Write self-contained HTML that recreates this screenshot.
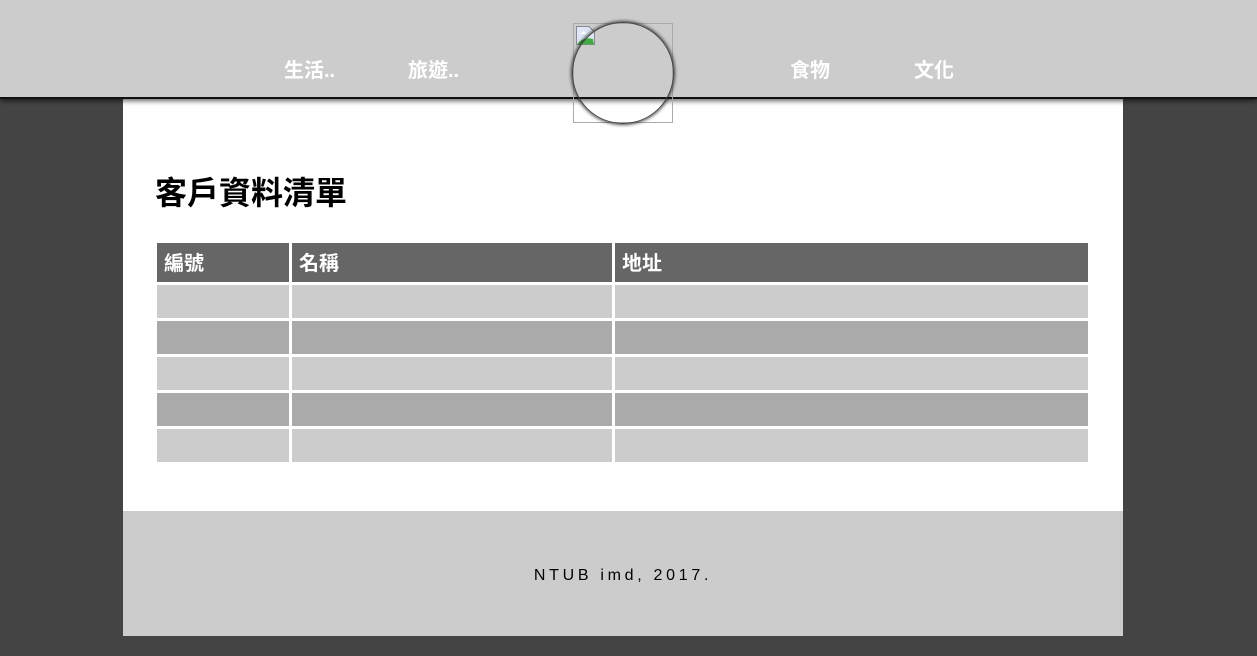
<!DOCTYPE html>
<html><head><meta charset="utf-8"><style>
*{margin:0;padding:0;box-sizing:border-box}
body{width:1257px;height:656px;background:#444;position:relative;overflow:hidden;font-family:"Liberation Sans","Noto Sans CJK TC",sans-serif}
.hdr{position:absolute;left:0;top:0;width:1257px;height:99px;background:#ccc;border-bottom:2px solid #111;box-shadow:0 2px 5px rgba(0,0,0,.6);z-index:2}
.nav{position:absolute;top:58px;color:#fff;font-size:20px;font-weight:bold;line-height:26px}
.main{position:absolute;left:123px;top:99px;width:1000px;height:412px;background:#fff}
.foot{position:absolute;left:123px;top:511px;width:1000px;height:125px;background:#ccc;text-align:center;font-size:16px;letter-spacing:3.7px;line-height:20px;padding-top:55px;color:#000}
h1{position:absolute;left:155px;top:173px;font-size:32px;font-weight:bold;line-height:40px;z-index:3}
.c{position:absolute;height:33px}
.h{background:#666;color:#fff;font-size:20px;font-weight:bold;padding-left:7px;line-height:43px;height:39px}
.logo{position:absolute;left:573px;top:23px;width:100px;height:100px;border:1px solid #aaa;z-index:4}
.circ{position:absolute;left:572px;top:22px;width:102px;height:102px;border-radius:50%;border:1.5px solid #444;box-shadow:0 0 3px 1px rgba(0,0,0,.7);z-index:5}
</style></head><body>
<div class="hdr">
<div class="nav" style="left:284px">生活..</div>
<div class="nav" style="left:408px">旅遊..</div>
<div class="nav" style="left:790px">食物</div>
<div class="nav" style="left:914px">文化</div>
</div>
<div class="logo"><svg width="22" height="22" style="position:absolute;left:1px;top:1px"><path d="M1.5 1.5H14L19.5 7V19.5H1.5Z" fill="#dde6f2" stroke="#889"/><path d="M5 9 L9 6 L12 9Z" fill="#fff"/><path d="M2 19.5 Q8 11 18 14 L19 19.5Z" fill="#4a4"/></svg></div>
<div class="circ"></div>
<div class="main"></div>
<h1>客戶資料清單</h1>
<div class="c h" style="left:157px;top:243px;width:132px">編號</div>
<div class="c h" style="left:292px;top:243px;width:320px">名稱</div>
<div class="c h" style="left:615px;top:243px;width:473px">地址</div>
<div class="c" style="left:157px;top:285px;width:132px;background:#ccc"></div><div class="c" style="left:292px;top:285px;width:320px;background:#ccc"></div><div class="c" style="left:615px;top:285px;width:473px;background:#ccc"></div>
<div class="c" style="left:157px;top:321px;width:132px;background:#aaa"></div><div class="c" style="left:292px;top:321px;width:320px;background:#aaa"></div><div class="c" style="left:615px;top:321px;width:473px;background:#aaa"></div>
<div class="c" style="left:157px;top:357px;width:132px;background:#ccc"></div><div class="c" style="left:292px;top:357px;width:320px;background:#ccc"></div><div class="c" style="left:615px;top:357px;width:473px;background:#ccc"></div>
<div class="c" style="left:157px;top:393px;width:132px;background:#aaa"></div><div class="c" style="left:292px;top:393px;width:320px;background:#aaa"></div><div class="c" style="left:615px;top:393px;width:473px;background:#aaa"></div>
<div class="c" style="left:157px;top:429px;width:132px;background:#ccc"></div><div class="c" style="left:292px;top:429px;width:320px;background:#ccc"></div><div class="c" style="left:615px;top:429px;width:473px;background:#ccc"></div>
<div class="foot">NTUB imd, 2017.</div>
</body></html>
